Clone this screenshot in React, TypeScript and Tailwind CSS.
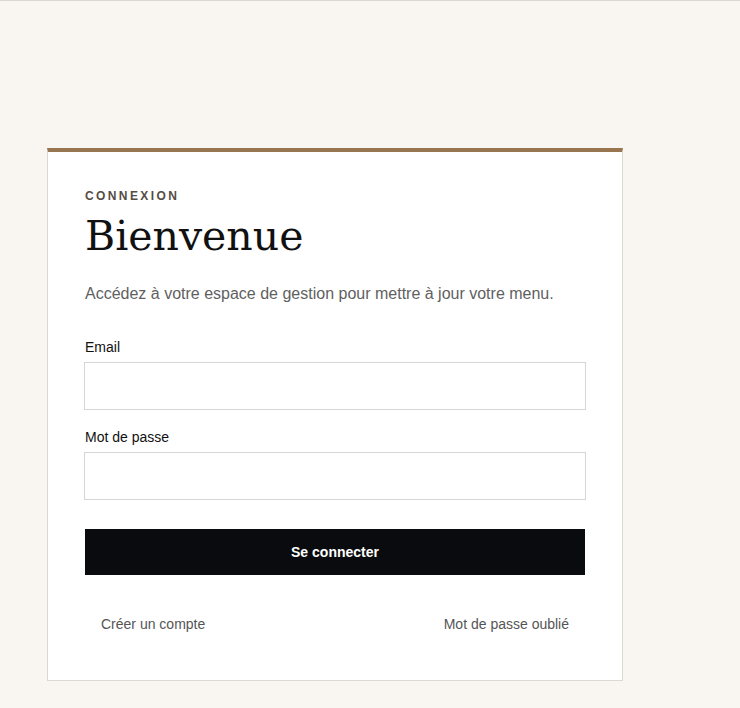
import React from "react";

export default function App() {
  return (
    <div className="min-h-[708px] w-full bg-[#f9f5f1] border-t border-[#dcd6d0] pt-[147px] pl-[47px] font-['Liberation_Sans',Arial,sans-serif]">
      <div className="w-[576px] bg-white border border-[#dcd8d3] border-t-4 border-t-[#9a7650] px-[37px] pt-[36px] pb-[46px]">
        <div className="text-[12px] leading-[16px] font-bold tracking-[0.2em] text-[#564c43]">CONNEXION</div>
        <h1 className="mt-[8px] text-[41px] leading-[48px] text-[#111] font-['DejaVu_Serif','Liberation_Serif',serif]">Bienvenue</h1>
        <p className="mt-[22px] text-[16px] leading-[24px] text-[#5f5f5f]">Accédez à votre espace de gestion pour mettre à jour votre menu.</p>
        <form className="mt-[31px] flex flex-col" onSubmit={(e) => e.preventDefault()}>
          <label className="text-[14px] leading-[20px] text-[#111]">Email</label>
          <input type="email" className="mt-[5px] h-[48px] w-[502px] -ml-px border border-[#d6d6d6] bg-white outline-none px-3" />
          <label className="mt-[17px] text-[14px] leading-[20px] text-[#111]">Mot de passe</label>
          <input type="password" className="mt-[5px] h-[48px] w-[502px] -ml-px border border-[#d6d6d6] bg-white outline-none px-3" />
          <button type="submit" className="mt-[29px] h-[46px] w-[500px] bg-[#0a0b0e] text-white text-[14px] font-bold">Se connecter</button>
        </form>
        <div className="mt-[39px] flex justify-between px-[16px] text-[14px] leading-[20px] text-[#555]">
          <span>Créer un compte</span>
          <span>Mot de passe oublié</span>
        </div>
      </div>
    </div>
  );
}
